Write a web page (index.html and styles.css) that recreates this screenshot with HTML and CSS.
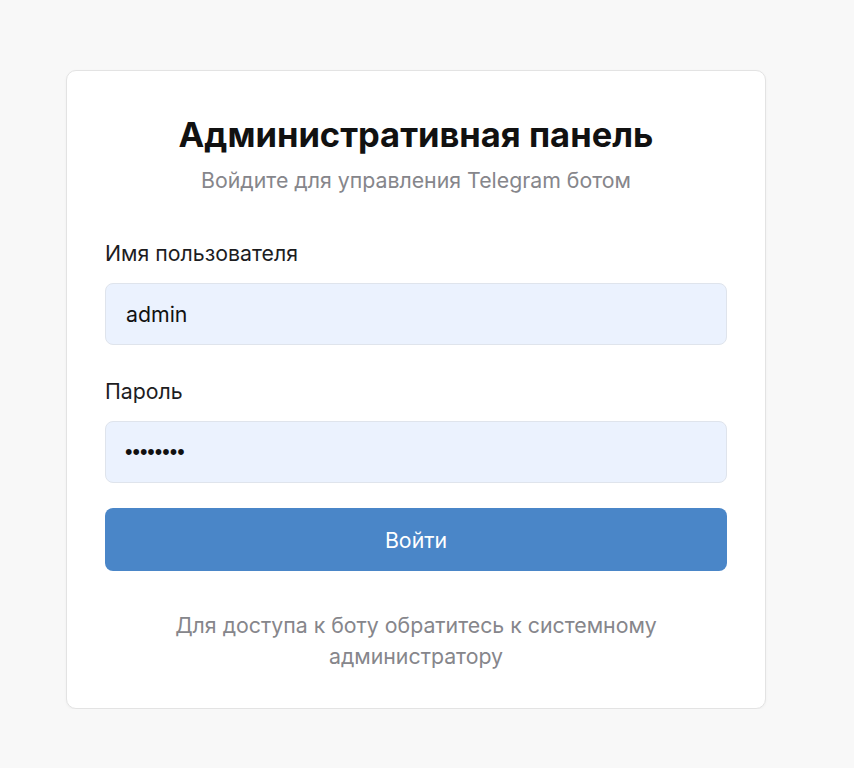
FILE: index.html
```html
<!DOCTYPE html>
<html lang="ru">
<head>
<meta charset="utf-8">
<title>Административная панель</title>
<link rel="stylesheet" href="styles.css">
</head>
<body>
<div class="page">
  <div class="card">
    <h1 class="title">Административная панель</h1>
    <p class="subtitle">Войдите для управления Telegram ботом</p>
    <form class="form">
      <label class="label" for="u">Имя пользователя</label>
      <input class="input" id="u" type="text" value="admin">
      <label class="label label-2" for="p">Пароль</label>
      <input class="input input-pass" id="p" type="password" value="password">
      <button class="btn" type="button">Войти</button>
    </form>
    <p class="note">Для доступа к боту обратитесь к системному администратору</p>
  </div>
</div>
</body>
</html>
```
FILE: styles.css
```css
html, body {
  margin: 0;
  padding: 0;
  background: #f8f8f8;
  font-family: Inter, "Noto Sans", sans-serif;
}
.page {
  padding: 70px 0 0 66px;
}
.card {
  box-sizing: border-box;
  width: 700px;
  background: #ffffff;
  border: 1px solid #e3e3e3;
  border-radius: 10px;
  box-shadow: 0 1px 3px rgba(0,0,0,0.04);
  padding: 44px 38px 36px 38px;
}
.title {
  margin: 0;
  text-align: center;
  font-size: 34.5px;
  line-height: 40px;
  font-weight: 700;
  color: #111111;
}
.subtitle {
  margin: 11px 0 0 0;
  text-align: center;
  font-size: 21.3px;
  line-height: 28px;
  color: #86868b;
}
.form {
  display: flex;
  flex-direction: column;
  margin-top: 45px;
}
.label {
  font-size: 21.3px;
  line-height: 28px;
  color: #1d1d1f;
  font-weight: 400;
}
.label-2 {
  margin-top: 32px;
}
.input {
  box-sizing: border-box;
  margin-top: 16px;
  height: 62px;
  width: 100%;
  padding: 0 20px;
  border: 1px solid #dfe4ec;
  border-radius: 8px;
  background: #ebf2fe;
  font-family: Inter, "Noto Sans", sans-serif;
  font-size: 21.3px;
  color: #111111;
  outline: none;
}
.input-pass {
  font-family: "Liberation Sans", sans-serif;
  padding-left: 19px;
}
.btn {
  margin-top: 25px;
  height: 63px;
  border: none;
  border-radius: 8px;
  background: #4a86c8;
  color: #ffffff;
  font-family: Inter, "Noto Sans", sans-serif;
  font-size: 21.3px;
  font-weight: 400;
}
.note {
  margin: 39px 0 0 0;
  text-align: center;
  font-size: 21.3px;
  line-height: 31px;
  color: #86868b;
}
```
